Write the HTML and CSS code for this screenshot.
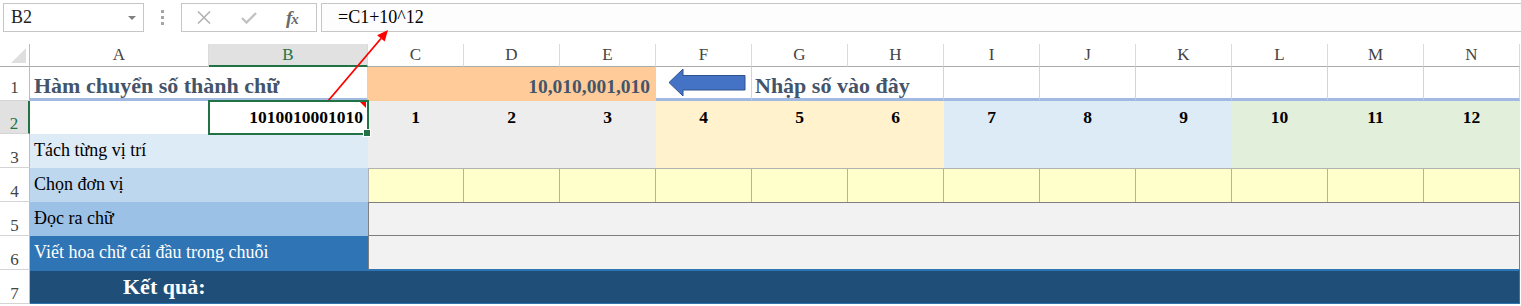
FILE: index.html
```html
<!DOCTYPE html>
<html lang="vi">
<head>
    <meta charset="UTF-8">
    <title>Hàm chuyển số thành chữ</title>
    <link rel="stylesheet" href="styles.css">
</head>
<body>
    <div class="formula-bar">
        <div class="name-box"><span>B2</span><span class="caret"></span></div>
        <div class="grip"><i></i><i></i><i></i></div>
        <div class="fx-buttons">
            <svg class="btn-icon" width="16" height="13" viewBox="0 0 16 13"><path d="M2 0.5 L14 12.5 M14 0.5 L2 12.5" stroke="#b3b3b3" stroke-width="1.6" fill="none"/></svg>
            <svg class="btn-icon" width="16" height="12" viewBox="0 0 16 12"><path d="M1 6 L5.5 10.5 L15 1" stroke="#c2c2c2" stroke-width="2.4" fill="none"/></svg>
            <span class="fx">f<span>x</span></span>
        </div>
        <div class="formula">=C1+10^12</div>
    </div>

    <div class="sheet">
        <!-- column headers -->
        <div class="corner"></div>
        <div class="col-head">A</div>
        <div class="col-head active">B</div>
        <div class="col-head">C</div>
        <div class="col-head">D</div>
        <div class="col-head">E</div>
        <div class="col-head">F</div>
        <div class="col-head">G</div>
        <div class="col-head">H</div>
        <div class="col-head">I</div>
        <div class="col-head">J</div>
        <div class="col-head">K</div>
        <div class="col-head">L</div>
        <div class="col-head">M</div>
        <div class="col-head">N</div>

        <!-- row 1 -->
        <div class="row-head first">1</div>
        <div class="cell heading title span-2">Hàm chuyển số thành chữ</div>
        <div class="cell number-input span-3">10,010,001,010</div>
        <div class="cell heading arrow-cell">
            <svg width="79" height="30" viewBox="0 0 79 30"><path d="M1 14.5 L15 1 L15 7.5 L77 7.5 L77 22 L15 22 L15 28 Z" fill="#4472c4" stroke="#2f528f" stroke-width="1"/></svg>
        </div>
        <div class="cell heading title hint span-2">Nhập số vào đây</div>
        <div class="cell heading"></div>
        <div class="cell heading"></div>
        <div class="cell heading"></div>
        <div class="cell heading"></div>
        <div class="cell heading"></div>
        <div class="cell heading"></div>

        <!-- row 2 -->
        <div class="row-head active">2</div>
        <div class="cell blank"></div>
        <div class="cell selected">1010010001010<span class="note-mark"></span><span class="fill-handle"></span></div>
        <div class="cell digit grey">1</div>
        <div class="cell digit grey">2</div>
        <div class="cell digit grey">3</div>
        <div class="cell digit cream">4</div>
        <div class="cell digit cream">5</div>
        <div class="cell digit cream">6</div>
        <div class="cell digit sky">7</div>
        <div class="cell digit sky">8</div>
        <div class="cell digit sky">9</div>
        <div class="cell digit mint">10</div>
        <div class="cell digit mint">11</div>
        <div class="cell digit mint">12</div>

        <!-- row 3 -->
        <div class="row-head">3</div>
        <div class="cell label tone-1 span-2">Tách từng vị trí</div>
        <div class="cell grey span-3"></div>
        <div class="cell cream span-3"></div>
        <div class="cell sky span-3"></div>
        <div class="cell mint span-3"></div>

        <!-- row 4 -->
        <div class="row-head">4</div>
        <div class="cell label tone-2 span-2">Chọn đơn vị</div>
        <div class="cell note first-note"></div>
        <div class="cell note"></div>
        <div class="cell note"></div>
        <div class="cell note"></div>
        <div class="cell note"></div>
        <div class="cell note"></div>
        <div class="cell note"></div>
        <div class="cell note"></div>
        <div class="cell note"></div>
        <div class="cell note"></div>
        <div class="cell note"></div>
        <div class="cell note"></div>

        <!-- row 5 -->
        <div class="row-head">5</div>
        <div class="cell label tone-3 span-2">Đọc ra chữ</div>
        <div class="cell calc span-12"></div>

        <!-- row 6 -->
        <div class="row-head">6</div>
        <div class="cell label tone-4 span-2">Viết hoa chữ cái đầu trong chuỗi</div>
        <div class="cell calc calc-last span-12"></div>

        <!-- row 7 -->
        <div class="row-head">7</div>
        <div class="cell result span-14">Kết quả:</div>
    </div>

    <svg class="callout" width="1521" height="306" viewBox="0 0 1521 306">
        <line x1="328" y1="101" x2="381" y2="38.5" stroke="#ff0000" stroke-width="1.8"/>
        <polygon points="388,30 384.7,41.6 377.1,35.2" fill="#ff0000"/>
    </svg>
</body>
</html>
```

FILE: styles.css
```css
* {
    box-sizing: border-box;
}
body {
    margin: 0;
    width: 1521px;
    height: 306px;
    overflow: hidden;
    position: relative;
    background-color: #ffffff;
    font-family: 'Liberation Serif', 'Times New Roman', serif;
    color: #000000;
}

/* formula bar */
.formula-bar {
    display: flex;
    height: 32px;
    padding: 3px 0 0 3px;
    margin-bottom: 12px;
}
.name-box {
    width: 141px;
    display: flex;
    align-items: center;
    justify-content: space-between;
    padding: 0 7px 0 7px;
    border: 1px solid #c6c6c6;
    font-size: 18px;
    color: #222222;
}
.caret {
    width: 0;
    height: 0;
    border-left: 4px solid transparent;
    border-right: 4px solid transparent;
    border-top: 4px solid #808080;
}
.grip {
    width: 37px;
    display: flex;
    flex-direction: column;
    align-items: center;
    justify-content: center;
    gap: 3px;
}
.grip i {
    display: block;
    width: 3px;
    height: 3px;
    background-color: #a6a6a6;
}
.fx-buttons {
    width: 136px;
    display: flex;
    align-items: center;
    gap: 29px;
    padding-left: 14px;
    border: 1px solid #c6c6c6;
}
.fx {
    font-style: italic;
    font-weight: bold;
    font-size: 19px;
    color: #6a6a6a;
    letter-spacing: -1px;
}
.fx span {
    font-size: 15px;
}
.formula {
    flex: 1;
    margin-left: 4px;
    display: flex;
    align-items: center;
    padding-left: 16px;
    border: 1px solid #c6c6c6;
    border-right: none;
    font-size: 18px;
    background-color: #fdfdfd;
}

/* sheet grid */
.sheet {
    display: grid;
    grid-template-columns: 30px 179px 159px repeat(12, 96px);
    grid-template-rows: 23px 34px 33px 34px 34px 34px 34px 34px;
}
.corner {
    position: relative;
    border-right: 1px solid #bcbcbc;
    border-bottom: 1px solid #ababab;
}
.corner::after {
    content: '';
    position: absolute;
    right: 3px;
    bottom: 3px;
    width: 15px;
    height: 15px;
    background-color: #dfdfdf;
    clip-path: polygon(100% 0, 100% 100%, 0 100%);
}
.col-head {
    display: flex;
    align-items: center;
    justify-content: center;
    font-size: 17px;
    color: #444444;
    border-right: 1px solid #dadada;
    border-bottom: 1px solid #ababab;
}
.col-head.active {
    background-color: #e1e1e1;
    color: #217346;
    border-bottom: 2px solid #217346;
}
.row-head {
    display: flex;
    align-items: flex-end;
    justify-content: center;
    padding-bottom: 1px;
    font-size: 17px;
    line-height: 17px;
    color: #444444;
    border-right: 1px solid #bcbcbc;
    border-bottom: 1px solid #d4d4d4;
}
.row-head.first {
    padding-bottom: 4px;
}
.row-head.active {
    background-color: #e1e1e1;
    color: #217346;
    border-right: 2px solid #217346;
}

.cell {
    display: flex;
    align-items: center;
    padding: 0 4px;
    white-space: nowrap;
    border-right: 1px solid #d4d4d4;
    border-bottom: 1px solid #d4d4d4;
}
.span-2 { grid-column: span 2; }
.span-3 { grid-column: span 3; }
.span-12 { grid-column: span 12; }
.span-14 { grid-column: span 14; }

/* row 1 */
.heading {
    border-bottom: 3px solid #a2b9e2;
    align-items: flex-end;
}
.title {
    font-size: 22px;
    line-height: 22px;
    font-weight: bold;
    color: #44546a;
    padding-bottom: 1px;
}
.hint {
    padding-left: 3px;
}
.number-input {
    justify-content: flex-end;
    align-items: flex-end;
    padding: 0 5px 3px 0;
    font-size: 19.5px;
    line-height: 20px;
    font-weight: bold;
    color: #44546a;
    background-color: #ffcc99;
    border-color: transparent;
}
.arrow-cell {
    align-items: center;
    padding: 0 0 0 12px;
}

/* row 2 */
.blank {
    border-right-color: transparent;
    border-bottom-color: transparent;
}
.selected {
    position: relative;
    z-index: 2;
    justify-content: flex-end;
    font-size: 17.5px;
    font-weight: bold;
    outline: 2px solid #217346;
    outline-offset: -1px;
    border-color: transparent;
}
.note-mark {
    position: absolute;
    top: 1px;
    right: 1px;
    width: 6px;
    height: 6px;
    background-color: #ff0000;
    clip-path: polygon(0 0, 100% 0, 100% 100%);
}
.fill-handle {
    position: absolute;
    right: -4px;
    bottom: -4px;
    width: 6px;
    height: 6px;
    background-color: #217346;
    border: 1px solid #ffffff;
    box-sizing: content-box;
}
.digit {
    justify-content: center;
    font-size: 17.5px;
    font-weight: bold;
}
.grey { background-color: #ededed; border-color: transparent; }
.cream { background-color: #fff2cc; border-color: transparent; }
.sky { background-color: #ddebf7; border-color: transparent; }
.mint { background-color: #e2efda; border-color: transparent; }

/* labels in column A */
.label {
    font-size: 18px;
    border-color: transparent;
}
.tone-1 { background-color: #ddebf7; }
.tone-2 { background-color: #bdd7ee; }
.tone-3 { background-color: #9bc2e6; }
.tone-4 { background-color: #2f75b5; color: #ffffff; }

/* row 4 */
.note {
    background-color: #ffffcc;
    border-top: 1px solid #b2b2b2;
    border-right: 1px solid #b2b2b2;
    border-bottom: none;
}
.first-note {
    border-left: 1px solid #b2b2b2;
}

/* rows 5 and 6 */
.calc {
    background-color: #f2f2f2;
    border: 1px solid #7f7f7f;
}
.calc-last {
    border-top: none;
    border-bottom-color: #2e75b6;
}

/* row 7 */
.result {
    padding-left: 93px;
    font-size: 22px;
    font-weight: bold;
    color: #ffffff;
    background-color: #1f4e78;
    border-top: 1px solid #2e75b6;
    border-bottom: 1px solid #2e75b6;
    border-right-color: #2e75b6;
}

.callout {
    position: absolute;
    top: 0;
    left: 0;
    pointer-events: none;
}
```
